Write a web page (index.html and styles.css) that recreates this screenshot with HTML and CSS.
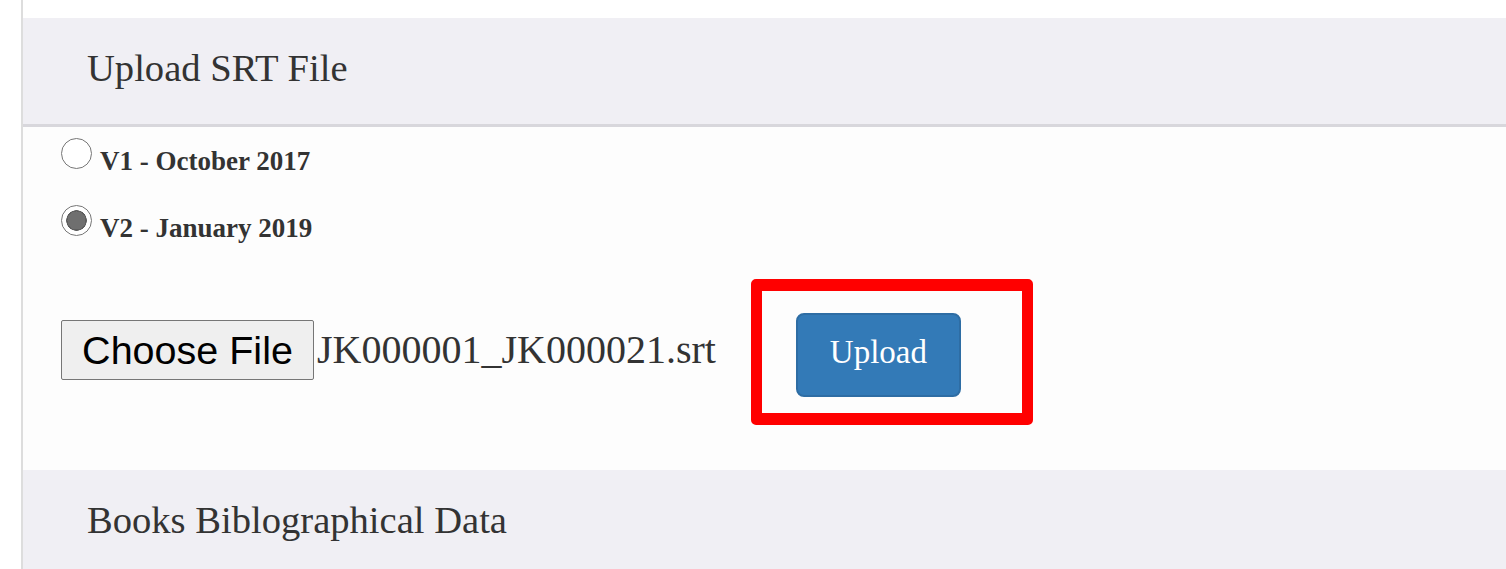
FILE: index.html
```html
<!DOCTYPE html>
<html lang="en">
<head>
<meta charset="utf-8">
<title>Upload SRT File</title>
<link rel="stylesheet" href="styles.css">
</head>
<body>
<div class="page">
  <section class="panel">
    <div class="panel-heading">Upload SRT File</div>
    <div class="panel-body">
      <label class="radio-row">
        <input type="radio" name="version" class="radio" value="v1">
        <span class="radio-text">V1 - October 2017</span>
      </label>
      <label class="radio-row second">
        <input type="radio" name="version" class="radio" value="v2" checked>
        <span class="radio-text">V2 - January 2019</span>
      </label>
      <div class="file-row">
        <button type="button" class="choose-btn">Choose File</button>
        <span class="file-name">JK000001_JK000021.srt</span>
        <div class="upload-wrap">
          <button type="button" class="upload-btn">Upload</button>
          <span class="highlight"></span>
        </div>
      </div>
    </div>
  </section>
  <section class="panel">
    <div class="panel-heading">Books Biblographical Data</div>
  </section>
</div>
</body>
</html>
```
FILE: styles.css
```css
html, body {
  margin: 0;
  padding: 0;
  background: #ffffff;
}

body {
  font-family: "Liberation Serif", "Times New Roman", serif;
  color: #333333;
  overflow: hidden;
}

.page {
  margin-left: 21px;
  border-left: 2px solid #dddddd;
  padding-top: 18px;
  min-height: 569px;
  box-sizing: border-box;
}

.panel-heading {
  height: 106px;
  box-sizing: border-box;
  background: #f0eff4;
  padding: 28px 0 0 64px;
  font-size: 38.6px;
  line-height: 44px;
  color: #333333;
}

.panel:first-child .panel-heading {
  border-bottom: 3px solid #d8d7dc;
  height: 109px;
}

.panel:last-child .panel-heading {
  height: 120px;
}

.panel-body {
  background: #fdfdfd;
  padding: 11px 0 73px 38px;
}

.radio-row {
  display: flex;
  align-items: flex-start;
  height: 38px;
}

.radio-row.second {
  margin-top: 29px;
}

.radio {
  appearance: none;
  -webkit-appearance: none;
  width: 31px;
  height: 31px;
  margin: 0 8px 0 0;
  border: 1px solid #767676;
  border-radius: 50%;
  background: #ffffff;
  box-sizing: border-box;
  flex: none;
}

.radio:checked {
  background: radial-gradient(circle, #6f6f6f 0 9px, #5e5e5e 9px 10px, #ffffff 10.5px);
}

.radio-text {
  padding-top: 8px;
  font-size: 27px;
  line-height: 30px;
  font-weight: bold;
  color: #333333;
}

.file-row {
  display: flex;
  align-items: flex-start;
  margin-top: 70px;
}

.choose-btn {
  margin-top: 7px;
  width: 253px;
  height: 60px;
  padding: 0;
  background: #efefef;
  border: 1px solid #767676;
  border-radius: 2px;
  font-family: "Liberation Sans", Arial, sans-serif;
  font-size: 39.5px;
  color: #000000;
}

.file-name {
  margin: 14px 0 0 3px;
  font-size: 40px;
  line-height: 46px;
  color: #333333;
}

.upload-wrap {
  position: relative;
  margin-left: 80px;
}

.upload-btn {
  display: flex;
  align-items: center;
  justify-content: center;
  width: 165px;
  height: 84px;
  padding: 0 0 6px;
  box-sizing: border-box;
  background: #337ab7;
  border: 2px solid #2e6da4;
  border-radius: 8px;
  font-family: "Liberation Serif", "Times New Roman", serif;
  font-size: 33px;
  color: #ffffff;
}

.highlight {
  position: absolute;
  left: -45px;
  top: -34px;
  width: 282px;
  height: 146px;
  box-sizing: border-box;
  border: 12px solid #ff0000;
  border-left-width: 11px;
  border-right-width: 11px;
  border-radius: 5px;
  pointer-events: none;
}
```
